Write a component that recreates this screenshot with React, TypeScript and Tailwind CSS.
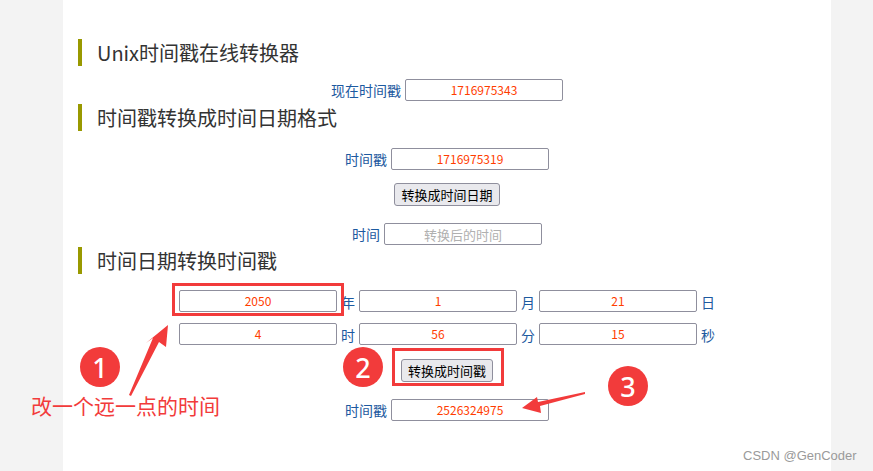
import React from "react";

const Heading = ({ children, mt }: { children: React.ReactNode; mt: string }) => (
  <div className={`${mt} ml-[15px] flex h-[27px] items-center border-l-4 border-[#999900] pl-[15px] text-[20px] leading-none text-[#333333]`}>
    {children}
  </div>
);

const Field = ({ value, placeholder, w = "w-[158px]" }: { value?: string; placeholder?: string; w?: string }) => (
  <div
    className={`${w} flex h-[22px] items-center justify-center rounded-[2px] border border-[#8f8f9d] bg-white text-[12px] leading-none ${
      value ? "text-[#ff3d00]" : "text-[#b0b0b0] text-[13px]"
    }`}
  >
    {value ?? placeholder}
  </div>
);

const Label = ({ children }: { children: React.ReactNode }) => (
  <span className="text-[14px] leading-none text-[#1d5aa0]">{children}</span>
);

const Btn = ({ children }: { children: React.ReactNode }) => (
  <div className="flex h-[23px] items-center rounded-[3px] border border-[#8f8f9d] bg-[#e9e9ed] px-[6px] text-[13px] leading-none text-black">
    {children}
  </div>
);

export default function App() {
  return (
    <div className="relative h-[471px] w-[873px] overflow-hidden bg-[#f3f3f3] font-['Noto_Sans_CJK_SC',sans-serif]">
      <div className="ml-[63px] flex h-[471px] w-[768px] flex-col bg-white">
        <Heading mt="mt-[39px]">Unix时间戳在线转换器</Heading>
        <div className="mt-[13px] flex items-center justify-center gap-[4px]">
          <Label>现在时间戳</Label>
          <Field value="1716975343" />
        </div>
        <Heading mt="mt-[3px]">时间戳转换成时间日期格式</Heading>
        <div className="mt-[17px] flex items-center justify-center gap-[4px]">
          <Label>时间戳</Label>
          <Field value="1716975319" />
        </div>
        <div className="mt-[13px] flex justify-center">
          <Btn>转换成时间日期</Btn>
        </div>
        <div className="mt-[17px] flex items-center justify-center gap-[4px]">
          <Label>时间</Label>
          <Field placeholder="转换后的时间" />
        </div>
        <Heading mt="mt-[2px]">时间日期转换时间戳</Heading>
        <div className="ml-[116px] mt-[15px] flex flex-col gap-[9px]">
          {[
            [["2050", "年"], ["1", "月"], ["21", "日"]],
            [["4", "时"], ["56", "分"], ["15", "秒"]],
          ].map((row, i) => (
            <div key={i} className="flex items-center">
              {row.map(([v, l]) => (
                <React.Fragment key={l}>
                  <Field value={v} />
                  <span className="w-[22px] text-center">
                    <Label>{l}</Label>
                  </span>
                </React.Fragment>
              ))}
            </div>
          ))}
        </div>
        <div className="mt-[13px] flex justify-center">
          <Btn>转换成时间戳</Btn>
        </div>
        <div className="mt-[17px] flex items-center justify-center gap-[4px]">
          <Label>时间戳</Label>
          <Field value="2526324975" />
        </div>
      </div>

      {/* annotations */}
      <div className="absolute left-[172px] top-[283px] h-[33px] w-[172px] border-[3px] border-[#f23b3b]" />
      <div className="absolute left-[392px] top-[348px] h-[38px] w-[112px] border-[3px] border-[#f23b3b]" />

      <svg className="absolute left-0 top-0" width="873" height="471">
        <polygon points="168,325 166,347 159,342 131,396 129,395 153,338 146,343" fill="#f23b3b" />
        <polygon points="522,408 537,397 538,402 585,392 585,394 540,406 541,413" fill="#f23b3b" />
      </svg>

      <div className="absolute left-[80px] top-[347px] flex h-[40px] w-[40px] items-center justify-center rounded-full bg-[#f23b3b] font-['Noto_Sans',sans-serif] text-[27px] font-medium leading-none text-white">
        1
      </div>
      <div className="absolute left-[343px] top-[347px] flex h-[40px] w-[40px] items-center justify-center rounded-full bg-[#f23b3b] font-['Noto_Sans',sans-serif] text-[27px] font-medium leading-none text-white">
        2
      </div>
      <div className="absolute left-[608px] top-[366px] flex h-[40px] w-[40px] items-center justify-center rounded-full bg-[#f23b3b] font-['Noto_Sans',sans-serif] text-[27px] font-medium leading-none text-white">
        3
      </div>

      <div className="absolute left-[31px] top-[395px] text-[21px] leading-none text-[#f23b3b]">改一个远一点的时间</div>

      <div className="absolute left-[743px] top-[449px] font-['Liberation_Sans',sans-serif] text-[13px] leading-none text-[#9a9a9a]">
        CSDN @GenCoder
      </div>
    </div>
  );
}
